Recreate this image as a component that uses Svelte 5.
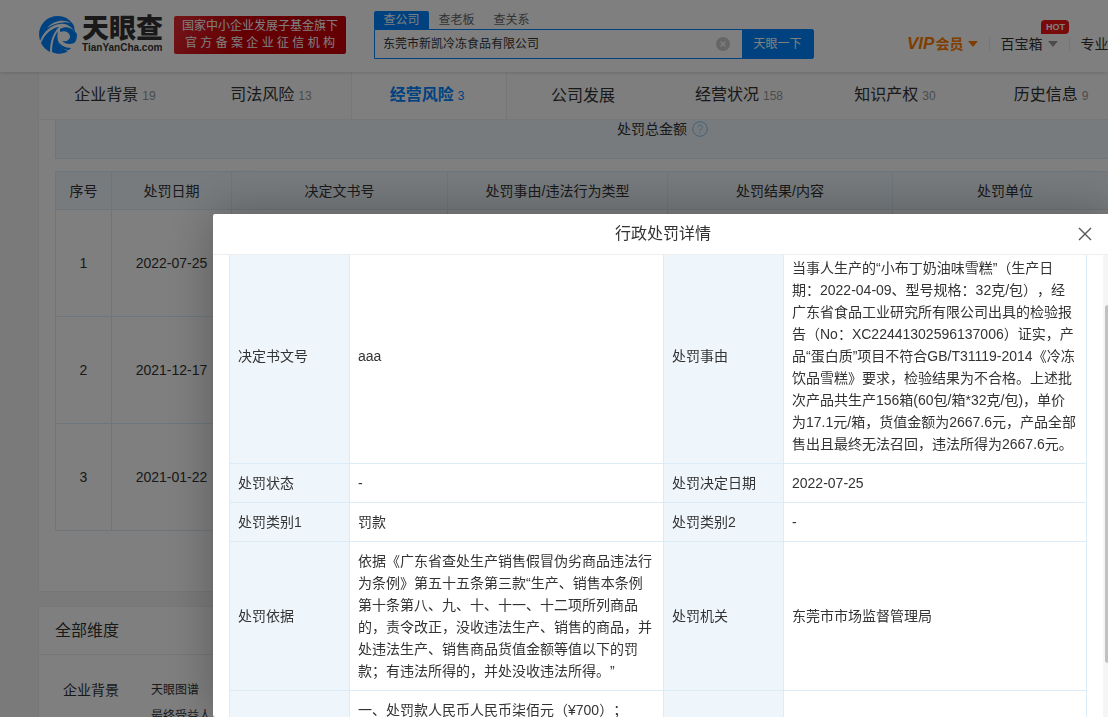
<script>
    let keyword = '东莞市新凯冷冻食品有限公司';
    let showDetail = true;

    const searchTypes = ['查公司', '查老板', '查关系'];
    let searchType = '查公司';

    const tabs = [
        { name: '企业背景', count: 19 },
        { name: '司法风险', count: 13 },
        { name: '经营风险', count: 3 },
        { name: '公司发展', count: '' },
        { name: '经营状况', count: 158 },
        { name: '知识产权', count: 30 },
        { name: '历史信息', count: 9 },
    ];
    let activeTab = '经营风险';

    const columns = ['序号', '处罚日期', '决定文书号', '处罚事由/违法行为类型', '处罚结果/内容', '处罚单位'];
    const penalties = ['2022-07-25', '2021-12-17', '2021-01-22'];

    const reason = [
        '当事人生产的“小布丁奶油味雪糕”（生产日',
        '期：2022-04-09、型号规格：32克/包），经',
        '广东省食品工业研究所有限公司出具的检验报',
        '告（No：XC22441302596137006）证实，产',
        '品“蛋白质”项目不符合GB/T31119-2014《冷冻',
        '饮品雪糕》要求，检验结果为不合格。上述批',
        '次产品共生产156箱(60包/箱*32克/包)，单价',
        '为17.1元/箱，货值金额为2667.6元，产品全部',
        '售出且最终无法召回，违法所得为2667.6元。',
    ].join('\n');

    const basis = [
        '依据《广东省查处生产销售假冒伪劣商品违法行',
        '为条例》第五十五条第三款“生产、销售本条例',
        '第十条第八、九、十、十一、十二项所列商品',
        '的，责令改正，没收违法生产、销售的商品，并',
        '处违法生产、销售商品货值金额等值以下的罚',
        '款；有违法所得的，并处没收违法所得。”',
    ].join('\n');

    const details = [
        ['决定书文号', 'aaa', '处罚事由', reason],
        ['处罚状态', '-', '处罚决定日期', '2022-07-25'],
        ['处罚类别1', '罚款', '处罚类别2', '-'],
        ['处罚依据', basis, '处罚机关', '东莞市市场监督管理局'],
    ];
</script>

<div class="page">
    <header>
        <a class="logo" href="#home">
            <svg width="38" height="38" viewBox="0 0 38 38">
                <path d="M0 19C0 8 8 0 19 0C26 0 32 4 35 10L36 16C32 10 27 7 21 8C12 9 5 15 1 25Z" fill="#0084ff"/>
                <path d="M2 27C6 18 12 12 20 11C14 17 11 25 11 36C7 34 4 31 2 27Z" fill="#0084ff"/>
                <path d="M13 36C13 27 15 20 19 15C17 24 20 32 29 35C25 38 18 39 13 36Z" fill="#0084ff"/>
                <path d="M21 13C27 9 34 12 38 18C38 22 37 26 35 27C31 29 26 28 23 25C28 26 31 24 31 20C30 16 26 14 21 16Z" fill="#0084ff"/>
                <path d="M19 25C21 29 26 32 32 32L30 34C24 34 20 31 19 25Z" fill="#0084ff"/>
                <path d="M8 12C15 4 25 3 32 7C25 5 16 7 8 12Z" fill="#fff"/>
            </svg>
            <span class="brand">
                <strong>天眼查</strong>
                <small>TianYanCha.com</small>
            </span>
        </a>
        <div class="slogan">
            <span>国家中小企业发展子基金旗下</span>
            <span>官 方 备 案 企 业 征 信 机 构</span>
        </div>
        <form class="search" on:submit|preventDefault>
            <div class="types">
                {#each searchTypes as type}
                    <button type="button" class:active={type === searchType} on:click={() => searchType = type}>{type}</button>
                {/each}
            </div>
            <div class="field">
                <input type="text" aria-label="搜索" bind:value={keyword}>
                <button type="button" class="clear" aria-label="清空" on:click={() => keyword = ''}>
                    <svg width="14" height="14" viewBox="0 0 14 14">
                        <circle cx="7" cy="7" r="7" fill="#ccc"/>
                        <path d="M4.5 4.5L9.5 9.5M9.5 4.5L4.5 9.5" stroke="#fff" stroke-width="1.2"/>
                    </svg>
                </button>
                <button class="submit">天眼一下</button>
            </div>
        </form>
        <nav class="links">
            <a class="vip" href="#vip"><em>VIP</em>会员<i class="caret"></i></a>
            <a href="#box">百宝箱<i class="caret"></i><b class="hot">HOT</b></a>
            <a href="#pro">专业</a>
        </nav>
    </header>

    <main>
        <section class="card">
            <nav class="tabs">
                {#each tabs as tab}
                    <button class:active={tab.name === activeTab} on:click={() => activeTab = tab.name}>
                        {tab.name}{#if tab.count}<span>{tab.count}</span>{/if}
                    </button>
                {/each}
            </nav>
            <div class="inner">
                <div class="summary">
                    处罚总金额
                    <svg width="16" height="16" viewBox="0 0 16 16" fill="none" stroke="#8cc4ee">
                        <circle cx="8" cy="8" r="7.3"/>
                        <path d="M5.8 6.3C5.8 3.3 10.3 3.3 10.3 6.2C10.3 7.8 8 8 8 10M8 11.2V12.4"/>
                    </svg>
                </div>
                <table class="list">
                    <colgroup>
                        <col style="width: 56px">
                        <col style="width: 120px">
                        <col style="width: 216px">
                        <col style="width: 220px">
                        <col style="width: 225px">
                        <col>
                    </colgroup>
                    <thead>
                        <tr>
                            {#each columns as column}
                                <th>{column}</th>
                            {/each}
                        </tr>
                    </thead>
                    <tbody>
                        {#each penalties as date, i}
                            <tr>
                                <td>{i + 1}</td>
                                <td>{date}</td>
                                <td></td>
                                <td></td>
                                <td></td>
                                <td></td>
                            </tr>
                        {/each}
                    </tbody>
                </table>
            </div>
        </section>

        <section class="card all">
            <h2>全部维度</h2>
            <div class="dimension">
                <h3>企业背景</h3>
                <ul>
                    <li><a href="#graph">天眼图谱</a></li>
                    <li><a href="#owner">最终受益人</a></li>
                </ul>
            </div>
        </section>
    </main>
</div>

{#if showDetail}
    <div class="mask">
        <div class="dialog" role="dialog" aria-labelledby="detail-title">
            <div class="title">
                <h1 id="detail-title">行政处罚详情</h1>
                <button aria-label="关闭" on:click={() => showDetail = false}>
                    <svg width="14" height="14" viewBox="0 0 14 14">
                        <path d="M1 1L13 13M13 1L1 13" stroke="#555" stroke-width="1.4"/>
                    </svg>
                </button>
            </div>
            <div class="body">
                <div class="content">
                    <table class="detail">
                        <colgroup>
                            <col style="width: 120px">
                            <col style="width: 314px">
                            <col style="width: 120px">
                            <col>
                        </colgroup>
                        <tbody>
                            {#each details as [label, value, label2, value2]}
                                <tr>
                                    <th>{label}</th>
                                    <td>{value}</td>
                                    <th>{label2}</th>
                                    <td>{value2}</td>
                                </tr>
                            {/each}
                            <tr class="last">
                                <th></th>
                                <td>一、处罚款人民币人民币柒佰元（¥700）；</td>
                                <th></th>
                                <td></td>
                            </tr>
                        </tbody>
                    </table>
                </div>
                <div class="track"><div class="thumb"></div></div>
            </div>
        </div>
    </div>
{/if}

<style>
    :global(body) {
        overflow: hidden;
        font-family: 'Liberation Sans', 'Noto Sans CJK SC', sans-serif;
        font-size: 14px;
        line-height: 22px;
        color: #333;
        text-spacing-trim: space-all;
    }

    .page {
        height: 100vh;
        overflow: hidden;
        background: #f5f5f5;
    }

    button {
        padding: 0;
        border: none;
        background: none;
        font: inherit;
        color: inherit;
        cursor: pointer;
    }

    a {
        color: inherit;
        text-decoration: none;
    }

    h1, h2, h3, ul {
        margin: 0;
        padding: 0;
        font-weight: 400;
        list-style: none;
    }

    header {
        position: relative;
        display: flex;
        align-items: flex-start;
        height: 72px;
        padding-left: 39px;
        box-sizing: border-box;
        background: #fff;
        box-shadow: 0 1px 3px rgba(0, 0, 0, .15);
        white-space: nowrap;
    }

    header > * {
        flex-shrink: 0;
    }

    .logo {
        display: flex;
        gap: 5px;
        width: 135px;
        margin-top: 16px;
    }

    .brand {
        display: flex;
        flex-direction: column;
    }

    .brand strong {
        font-size: 27px;
        font-weight: 900;
        line-height: 26px;
    }

    .brand small {
        font-size: 10px;
        font-weight: 700;
        line-height: 12px;
    }

    .slogan {
        display: flex;
        flex-direction: column;
        align-items: center;
        justify-content: center;
        width: 172px;
        height: 38px;
        margin: 16px 28px 0 0;
        border-radius: 2px;
        background: linear-gradient(120deg, #e52b33, #c80008 40%);
        color: #fff;
        font-size: 12px;
        line-height: 17px;
    }

    .search {
        width: 440px;
        margin-top: 11px;
        font-size: 12px;
    }

    .types {
        display: flex;
    }

    .types button {
        width: 55px;
        height: 18px;
        line-height: 18px;
        color: #666;
    }

    .types button.active {
        border-radius: 2px 2px 0 0;
        background: #0084ff;
        color: #fff;
    }

    .field {
        display: flex;
        align-items: center;
        height: 30px;
        box-sizing: border-box;
        border: 1px solid #0084ff;
        border-radius: 0 2px 2px 0;
        background: #fff;
    }

    .field input {
        flex: 1;
        min-width: 0;
        padding: 0 8px;
        border: none;
        outline: none;
        background: none;
        font: inherit;
        color: #333;
    }

    .clear {
        display: flex;
        margin-right: 12px;
    }

    .submit {
        width: 71px;
        height: 100%;
        background: #0084ff;
        color: #fff;
    }

    .links {
        display: flex;
        margin: 37px 0 0 93px;
        line-height: 14px;
    }

    .links a {
        position: relative;
        display: flex;
        align-items: center;
        padding-right: 11px;
        margin-right: 10px;
        border-right: 1px solid #eee;
    }

    .links a:last-child {
        border: none;
    }

    .links .vip {
        color: #ff7d00;
        font-weight: 700;
    }

    .vip em {
        margin-right: 1px;
        font-size: 17px;
    }

    .caret {
        margin-left: 6px;
        border: 5px solid transparent;
        border-top: 6px solid #999;
        border-bottom: none;
    }

    .vip .caret {
        margin-left: 5px;
        border-top-color: #ff7d00;
    }

    .hot {
        position: absolute;
        top: -17px;
        right: 0;
        width: 28px;
        border-radius: 4px 4px 4px 0;
        background: #f01414;
        color: #fff;
        font-size: 9px;
        text-align: center;
    }

    main {
        margin: 0 -27px 0 38px;
    }

    .card {
        border: 1px solid #eee;
        border-top: none;
        background: #fff;
    }

    .tabs {
        display: flex;
        height: 47px;
        border-bottom: 1px solid #eee;
        background: #fcfcfc;
    }

    .tabs button {
        width: 156px;
        padding-right: 4px;
        border-right: 1px solid transparent;
        border-left: 1px solid transparent;
        font-size: 16px;
    }

    .tabs span {
        margin-left: 4px;
        color: #999;
        font-size: 12px;
        font-weight: 400;
    }

    .tabs .active {
        border-color: #eee;
        background: #fff;
        color: #0084ff;
        font-weight: 700;
    }

    .tabs .active span {
        color: #0084ff;
    }

    .inner {
        padding: 0 16px 60px;
    }

    .summary {
        display: flex;
        justify-content: center;
        gap: 5px;
        height: 38px;
        padding-left: 152px;
        margin-bottom: 12px;
        border: 1px solid #d9ebf6;
        border-top: none;
        background: #eef6fc;
        line-height: 18px;
    }

    .summary svg {
        margin-top: 1px;
    }

    table {
        width: 100%;
        border-collapse: collapse;
        table-layout: fixed;
    }

    th, td {
        border: 1px solid #dcecf6;
        font-weight: 400;
    }

    th {
        background: #eef6fc;
    }

    .list th, .list td {
        height: 37px;
        padding: 0;
        text-align: center;
    }

    .list td {
        height: 106px;
    }

    .all {
        margin-top: 14px;
        border-top: 1px solid #eee;
    }

    .all h2 {
        padding: 0 16px;
        border-bottom: 1px solid #eee;
        font-size: 16px;
        line-height: 47px;
    }

    .dimension {
        display: flex;
        gap: 32px;
        padding: 22px 24px;
    }

    .dimension h3 {
        font-size: 14px;
        line-height: 26px;
    }

    .dimension ul {
        font-size: 12px;
        line-height: 26px;
    }

    .mask {
        position: fixed;
        inset: 0;
        display: flex;
        overflow: hidden;
        background: rgba(0, 0, 0, .5);
    }

    .dialog {
        display: flex;
        flex: 1;
        flex-direction: column;
        margin: 214px -5px 0 213px;
        border-radius: 2px;
        background: #fff;
        box-shadow: 1px 1px 50px rgba(0, 0, 0, .3);
    }

    .title {
        position: relative;
        border-bottom: 1px solid #eee;
        text-align: center;
    }

    .title h1 {
        font-size: 16px;
        line-height: 40px;
    }

    .title button {
        position: absolute;
        top: 13px;
        right: 21px;
        display: flex;
    }

    .body {
        display: flex;
        flex: 1;
        min-height: 0;
    }

    .content {
        flex: 1;
        padding: 0 16px;
        overflow: hidden;
    }

    /* the table is scrolled a little under the title */
    .detail {
        margin-top: -7px;
    }

    .detail th, .detail td {
        padding: 8px;
        text-align: left;
        white-space: pre;
    }

    .detail .last td {
        height: 120px;
        vertical-align: top;
    }

    .track {
        width: 10px;
        background: #f5f5f5;
    }

    .thumb {
        width: 6px;
        height: 358px;
        margin: 50px auto 0;
        border-radius: 3px;
        background: #c1c1c1;
    }
</style>
